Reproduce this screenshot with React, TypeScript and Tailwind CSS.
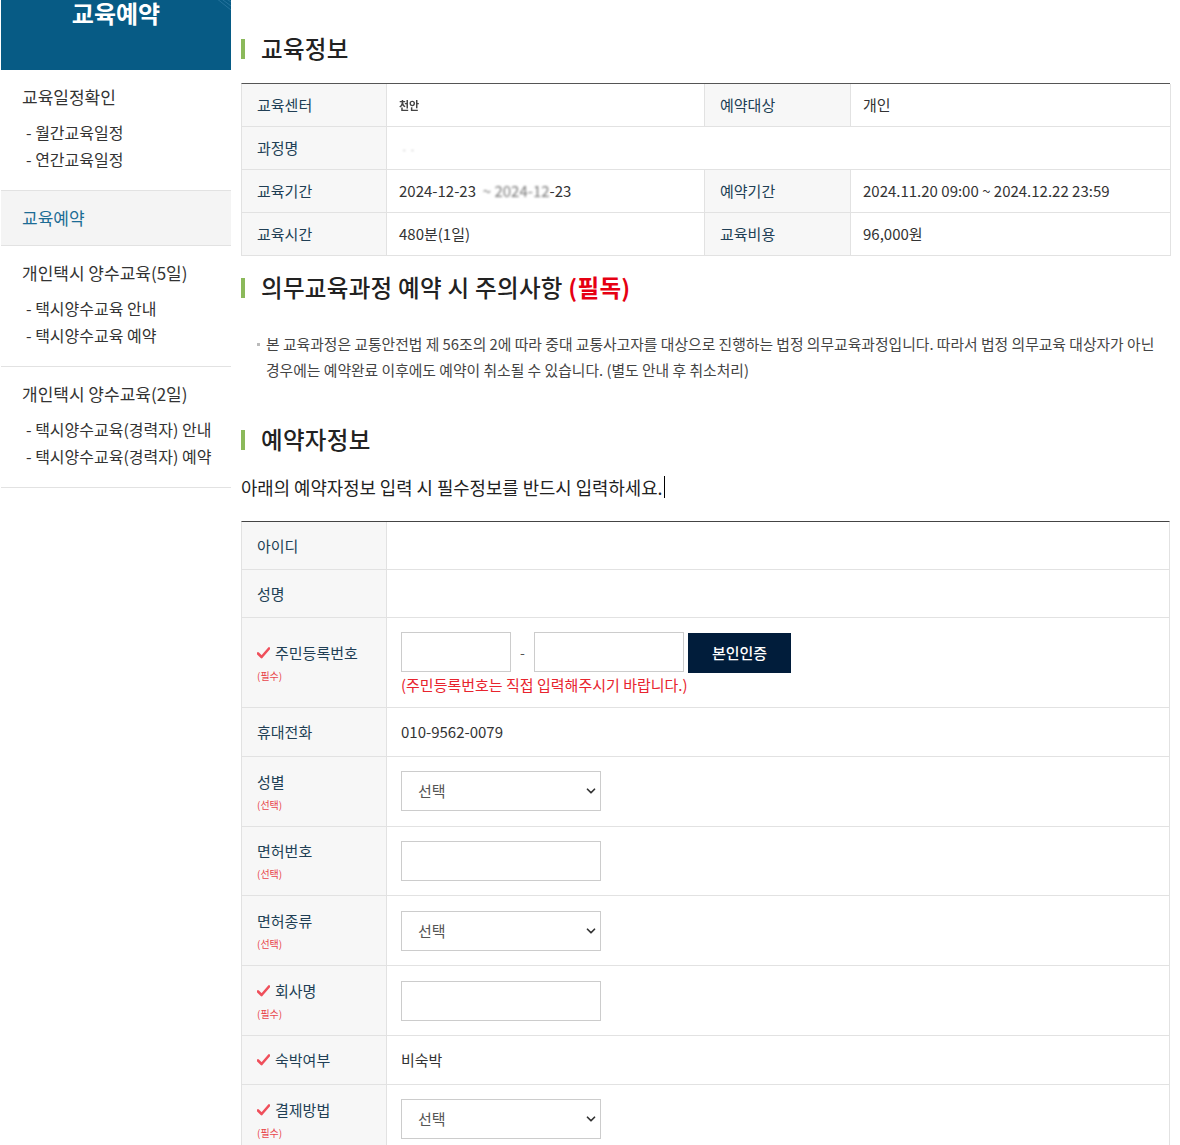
import { ChevronDown } from 'lucide-react';

const FONT = { fontFamily: '"Noto Sans CJK KR", "Noto Sans", sans-serif' };

const NAV = [
  { title: '교육일정확인', subs: ['월간교육일정', '연간교육일정'] },
  { title: '교육예약', active: true },
  { title: '개인택시 양수교육(5일)', subs: ['택시양수교육 안내', '택시양수교육 예약'] },
  { title: '개인택시 양수교육(2일)', subs: ['택시양수교육(경력자) 안내', '택시양수교육(경력자) 예약'] },
];

function Check() {
  return (
    <svg width="13" height="12" viewBox="0 0 13 12" className="mr-[5px] shrink-0">
      <path d="M1 6.5 L4.6 10 L12 1.5" fill="none" stroke="#ef4f5b" strokeWidth="2.6" strokeLinecap="round" strokeLinejoin="round" />
    </svg>
  );
}

function Heading({ children }: { children: React.ReactNode }) {
  return (
    <h2 className="flex items-center h-8 text-[23.5px] font-medium text-[#222] tracking-[0.3px]">
      <span className="w-1 h-5 bg-[#8bb95a] mr-4" />
      {children}
    </h2>
  );
}

function Label({ text, req, sub }: { text: string; req?: boolean; sub?: string }) {
  return (
    <div className="bg-[#f7f7f7] border-r border-[#e2e2e2] px-[15px] flex flex-col justify-center">
      <div className="flex items-center text-[15px] leading-[22px] text-[#213f55]">
        {req && <Check />}
        {text}
      </div>
      {sub && <div className="mt-[4px] text-[10px] leading-[16px] text-[#e8464c]">({sub})</div>}
    </div>
  );
}

function Select() {
  return (
    <div className="relative w-[200px] h-10">
      <select className="appearance-none w-full h-full border border-[#cccccc] bg-white pl-4 text-[15px] text-[#555] outline-none">
        <option>선택</option>
      </select>
      <ChevronDown className="absolute right-[3px] top-[13px] w-[14px] h-[14px] text-[#333] pointer-events-none" strokeWidth={3} />
    </div>
  );
}

function Input({ w = 'w-[200px]' }: { w?: string }) {
  return <input className={`${w} h-10 border border-[#cccccc] bg-white outline-none`} />;
}

const TH = 'h-[43px] flex items-center px-[15px] bg-[#f7f7f7] border-b border-r border-[#e2e2e2] text-[#213f55]';
const TD = 'h-[43px] flex items-center px-3 border-b border-r border-[#e2e2e2] text-[#333]';

export default function App() {
  return (
    <div className="flex bg-white min-h-screen text-[#333]" style={FONT}>
      {/* Sidebar */}
      <aside className="w-[230px] ml-px shrink-0">
        <div className="relative h-[70px] bg-[#075b85] overflow-hidden">
          <div className="text-center text-white text-[24px] font-bold leading-[28px] -mt-[1px]">교육예약</div>
          <svg className="absolute right-0 top-0" width="20" height="14" viewBox="0 0 20 14">
            <path d="M0 -6 L20 10 M4 -6 L20 6 M8 -6 L20 2" stroke="#3c85ad" strokeWidth="0.8" opacity="0.7" />
          </svg>
        </div>
        {NAV.map((n) =>
          n.active ? (
            <div key={n.title} className="h-[55px] bg-[#f4f4f4] border-b border-[#e2e2e2] pl-[21px] flex items-center text-[17px] text-[#1c6c95]">
              {n.title}
            </div>
          ) : (
            <div key={n.title} className="border-b border-[#e2e2e2] pl-[21px] pt-[15px] pb-[17px]">
              <div className="text-[17px] leading-6 text-[#333]">{n.title}</div>
              <ul className="mt-[10px]">
                {n.subs?.map((s) => (
                  <li key={s} className="text-[16px] leading-[27px] text-[#333] pl-[4px]">
                    - {s}
                  </li>
                ))}
              </ul>
            </div>
          )
        )}
      </aside>

      {/* Main */}
      <main className="ml-[10px] w-[929px] pt-[33px]">
        <Heading>교육정보</Heading>

        <div className="mt-[18px] border-t border-l border-[#e2e2e2] border-t-[#555] grid grid-cols-[145px_318px_146px_320px] text-[15px]">
          <div className={TH}>교육센터</div>
          <div className={TD}>
            <span className="blur-[0.7px] text-[11px] font-bold text-[#444]">천안</span>
          </div>
          <div className={TH}>예약대상</div>
          <div className={TD}>개인</div>

          <div className={TH}>과정명</div>
          <div className={`col-span-3 ${TD} px-4`}>
            <span className="blur-[0.8px] text-[8px] text-[#666] tracking-[6px]">..</span>
          </div>

          <div className={TH}>교육기간</div>
          <div className={TD}>
            2024-12-23&nbsp;&nbsp;<span className="blur-[1px] text-[#777]">~ 2024-12</span>-23
          </div>
          <div className={TH}>예약기간</div>
          <div className={TD}>2024.11.20 09:00 ~ 2024.12.22 23:59</div>

          <div className={TH}>교육시간</div>
          <div className={TD}>480분(1일)</div>
          <div className={TH}>교육비용</div>
          <div className={TD}>96,000원</div>
        </div>

        <div className="mt-[16px]">
          <Heading>
            의무교육과정 예약 시 주의사항&nbsp;<span className="text-[#e60012] font-bold">(필독)</span>
          </Heading>
        </div>

        <p className="relative mt-[27px] pl-[25px] text-[14.8px] leading-[26px] text-[#444] break-keep">
          <span className="absolute left-4 top-[12px] w-[3px] h-[3px] bg-[#bbb]" />
          본 교육과정은 교통안전법 제 56조의 2에 따라 중대 교통사고자를 대상으로 진행하는 법정 의무교육과정입니다. 따라서 법정 의무교육 대상자가 아닌
          경우에는 예약완료 이후에도 예약이 취소될 수 있습니다. (별도 안내 후 취소처리)
        </p>

        <div className="mt-[41px]">
          <Heading>예약자정보</Heading>
        </div>

        <p className="mt-[18px] flex items-center text-[17.8px] leading-[26px] text-[#222]">
          아래의 예약자정보 입력 시 필수정보를 반드시 입력하세요.
          <span className="inline-block w-px h-[22px] bg-black ml-[2px]" />
        </p>

        {/* Form */}
        <div className="mt-[21px] border-t border-l border-r border-[#e2e2e2] border-t-[#444]">
          <div className="grid grid-cols-[145px_1fr] h-[48px] border-b border-[#e2e2e2]">
            <Label text="아이디" />
            <div />
          </div>
          <div className="grid grid-cols-[145px_1fr] h-[48px] border-b border-[#e2e2e2]">
            <Label text="성명" />
            <div />
          </div>
          <div className="grid grid-cols-[145px_1fr] h-[90px] border-b border-[#e2e2e2]">
            <Label text="주민등록번호" req sub="필수" />
            <div className="pl-[14px] pt-[13px]">
              <div className="flex items-center">
                <Input w="w-[110px]" />
                <span className="w-[23px] text-center text-[14px] text-[#555]">-</span>
                <Input w="w-[150px]" />
                <button className="ml-1 mt-[2px] w-[103px] h-10 bg-[#011d3b] text-white text-[15px] font-medium">본인인증</button>
              </div>
              <div className="mt-[1px] text-[15px] leading-[22px] text-[#e8242e]">(주민등록번호는 직접 입력해주시기 바랍니다.)</div>
            </div>
          </div>
          <div className="grid grid-cols-[145px_1fr] h-[49px] border-b border-[#e2e2e2]">
            <Label text="휴대전화" />
            <div className="pl-[14px] flex items-center text-[15px] text-[#333]">010-9562-0079</div>
          </div>
          <div className="grid grid-cols-[145px_1fr] h-[70px] border-b border-[#e2e2e2]">
            <Label text="성별" sub="선택" />
            <div className="pl-[14px] pt-[14px]"><Select /></div>
          </div>
          <div className="grid grid-cols-[145px_1fr] h-[69px] border-b border-[#e2e2e2]">
            <Label text="면허번호" sub="선택" />
            <div className="pl-[14px] pt-[14px]"><Input /></div>
          </div>
          <div className="grid grid-cols-[145px_1fr] h-[70px] border-b border-[#e2e2e2]">
            <Label text="면허종류" sub="선택" />
            <div className="pl-[14px] pt-[15px]"><Select /></div>
          </div>
          <div className="grid grid-cols-[145px_1fr] h-[70px] border-b border-[#e2e2e2]">
            <Label text="회사명" req sub="필수" />
            <div className="pl-[14px] pt-[15px]"><Input /></div>
          </div>
          <div className="grid grid-cols-[145px_1fr] h-[49px] border-b border-[#e2e2e2]">
            <Label text="숙박여부" req />
            <div className="pl-[14px] flex items-center text-[15px] text-[#333]">비숙박</div>
          </div>
          <div className="grid grid-cols-[145px_1fr] h-[70px] border-b border-[#e2e2e2]">
            <Label text="결제방법" req sub="필수" />
            <div className="pl-[14px] pt-[14px]"><Select /></div>
          </div>
        </div>
      </main>
    </div>
  );
}
